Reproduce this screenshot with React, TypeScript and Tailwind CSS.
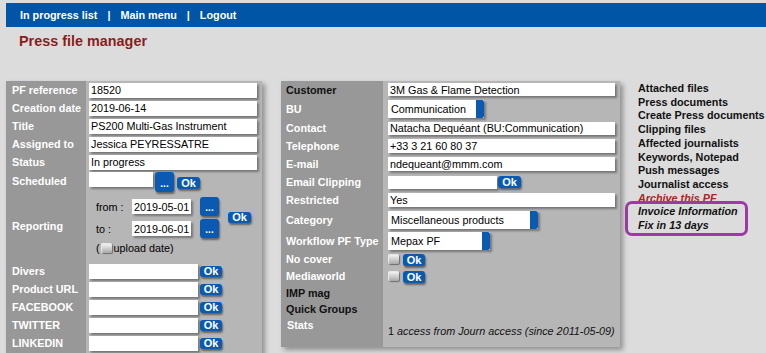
import React from "react";

const inputCls =
  "bg-white text-black font-normal pl-[2px] leading-[14px] shadow-[2px_2px_2px_rgba(0,0,0,0.35)] flex items-center whitespace-nowrap overflow-hidden";

function Ok({ w = 22, h = 12 }: { w?: number; h?: number }) {
  return (
    <div
      className="bg-[#0a5ab2] text-white font-bold rounded-[3px] flex items-center justify-center leading-none shadow-[1px_2px_2px_rgba(0,0,0,0.45)] text-[11px]"
      style={{ width: w, height: h }}
    >
      Ok
    </div>
  );
}

function Dots({ h = 19 }: { h?: number }) {
  return (
    <div
      className="w-[19px] bg-[#0a5ab2] text-white font-bold rounded-[3px] flex items-end justify-center pb-[3px] leading-none text-[10px] shadow-[1px_2px_2px_rgba(0,0,0,0.45)]"
      style={{ height: h }}
    >
      ...
    </div>
  );
}

function Check() {
  return (
    <div className="w-[11px] h-[10px] rounded-[2px] bg-[linear-gradient(to_bottom,#f2f2f2,#a8a8a8)] border-t border-l border-[#e8e8e8] shadow-[1px_1px_1px_rgba(0,0,0,0.4)]" />
  );
}

function Select({ w, text }: { w: number; text: string }) {
  return (
    <div
      className="h-[18px] bg-white flex items-center justify-between shadow-[2px_2px_2px_rgba(0,0,0,0.35)]"
      style={{ width: w }}
    >
      <span className="pl-[3px] text-black font-normal whitespace-nowrap">{text}</span>
      <div className="w-[8px] h-full bg-[#0a5ab2] rounded-r-[2px]" />
    </div>
  );
}

function LRow({
  label,
  h = 18,
  children,
  dark = false,
  className = "",
}: {
  label: React.ReactNode;
  h?: number;
  children?: React.ReactNode;
  dark?: boolean;
  className?: string;
}) {
  return (
    <div className={"flex items-center " + className} style={{ height: h }}>
      <div
        className={
          "w-[80px] pl-[6px] font-bold whitespace-nowrap " + (dark ? "text-[#111]" : "text-white")
        }
      >
        {label}
      </div>
      <div className="flex items-center pl-[3px]">{children}</div>
    </div>
  );
}

function MRow({
  label,
  h = 18,
  children,
  dark = false,
}: {
  label: React.ReactNode;
  h?: number;
  children?: React.ReactNode;
  dark?: boolean;
}) {
  return (
    <div className="flex items-center" style={{ height: h }}>
      <div
        className={
          "w-[102px] pl-[5px] font-bold whitespace-nowrap " + (dark ? "text-[#111]" : "text-white")
        }
      >
        {label}
      </div>
      <div className="flex items-center pl-[5px]">{children}</div>
    </div>
  );
}

export default function App() {
  return (
    <div className="w-[766px] h-[353px] overflow-hidden bg-[#dcdcdc] font-['Liberation_Sans',Arial,sans-serif] text-[10.8px] leading-[14px]">
      {/* nav */}
      <div className="pt-[3px] pl-[6px]">
        <div className="h-[24px] bg-[#0055a6] flex items-center pl-[14px] gap-[10px] text-white font-bold">
          <span>In progress list</span>
          <span>|</span>
          <span>Main menu</span>
          <span>|</span>
          <span>Logout</span>
        </div>
      </div>
      <div className="pt-[6px] pl-[19px] leading-[17px] text-[14.4px] font-bold text-[#8b1c1c]">
        Press file manager
      </div>

      <div className="mt-[31px] flex items-start">
        {/* left panel */}
        <div className="ml-[6px] w-[256px] pb-[12px] bg-[linear-gradient(to_right,#989898_80px,#b6b6b6_80px)] shadow-[3px_3px_5px_rgba(0,0,0,0.35)]">
          <LRow label="PF reference">
            <div className={inputCls + " w-[168px] h-[15px]"}>18520</div>
          </LRow>
          <LRow label="Creation date">
            <div className={inputCls + " w-[168px] h-[15px]"}>2019-06-14</div>
          </LRow>
          <LRow label="Title">
            <div className={inputCls + " w-[168px] h-[15px]"}>PS200 Multi-Gas Instrument</div>
          </LRow>
          <LRow label="Assigned to">
            <div className={inputCls + " w-[168px] h-[15px]"}>Jessica PEYRESSATRE</div>
          </LRow>
          <LRow label="Status">
            <div className={inputCls + " w-[168px] h-[15px]"}>In progress</div>
          </LRow>
          <div className="flex h-[23px]">
            <div className="w-[80px] pl-[6px] pt-[3px] font-bold text-white">Scheduled</div>
            <div className="flex items-start pl-[3px] pt-[1px]">
              <div className={inputCls + " w-[64px] h-[15px]"} />
              <div className="ml-[2px]">
                <Dots h={20} />
              </div>
              <div className="ml-[3px] mt-[5px]">
                <Ok w={23} h={12} />
              </div>
            </div>
          </div>
          <div className="flex h-[64px]">
            <div className="w-[80px] pl-[6px] font-bold text-white flex items-center">Reporting</div>
            <div className="pl-[10px] pt-[3px] flex flex-col">
              <div className="flex items-center">
                <div className="flex flex-col gap-[3px]">
                  <div className="flex items-center h-[19px] text-black">
                    <span className="w-[36px]">from :</span>
                    <div className={inputCls + " w-[59px] h-[15px]"}>2019-05-01</div>
                    <div className="ml-[9px]">
                      <Dots />
                    </div>
                  </div>
                  <div className="flex items-center h-[19px] text-black">
                    <span className="w-[36px]">to :</span>
                    <div className={inputCls + " w-[59px] h-[15px]"}>2019-06-01</div>
                    <div className="ml-[9px]">
                      <Dots />
                    </div>
                  </div>
                </div>
                <div className="ml-[9px]">
                  <Ok w={23} h={11} />
                </div>
              </div>
              <div className="mt-[3px] h-[14px] flex items-center text-black">
                <span>(</span>
                <div className="ml-[1px] mr-[2px]">
                  <Check />
                </div>
                <span>upload date)</span>
              </div>
            </div>
          </div>
          <LRow label="Divers" className="mt-[4px]">
            <div className={inputCls + " w-[109px] h-[15px]"} />
            <div className="ml-[2px]">
              <Ok w={22} h={11} />
            </div>
          </LRow>
          <LRow label="Product URL">
            <div className={inputCls + " w-[109px] h-[15px]"} />
            <div className="ml-[2px]">
              <Ok w={22} h={11} />
            </div>
          </LRow>
          <LRow label="FACEBOOK">
            <div className={inputCls + " w-[109px] h-[15px]"} />
            <div className="ml-[2px]">
              <Ok w={22} h={11} />
            </div>
          </LRow>
          <LRow label="TWITTER">
            <div className={inputCls + " w-[109px] h-[15px]"} />
            <div className="ml-[2px]">
              <Ok w={22} h={11} />
            </div>
          </LRow>
          <LRow label="LINKEDIN">
            <div className={inputCls + " w-[109px] h-[15px]"} />
            <div className="ml-[2px]">
              <Ok w={22} h={11} />
            </div>
          </LRow>
        </div>

        {/* middle panel */}
        <div className="ml-[19px] w-[339px] pb-[8px] bg-[linear-gradient(to_right,#989898_102px,#b6b6b6_102px)] shadow-[3px_3px_5px_rgba(0,0,0,0.35)]">
          <MRow label="Customer" h={17} dark>
            <div className={inputCls + " w-[227px] h-[13px]"}>3M Gas &amp; Flame Detection</div>
          </MRow>
          <MRow label="BU" h={21}>
            <Select w={96} text="Communication" />
          </MRow>
          <MRow label="Contact">
            <div className={inputCls + " w-[227px] h-[13px]"}>Natacha Dequéant (BU:Communication)</div>
          </MRow>
          <MRow label="Telephone">
            <div className={inputCls + " w-[227px] h-[14px]"}>+33 3 21 60 80 37</div>
          </MRow>
          <MRow label="E-mail">
            <div className={inputCls + " w-[227px] h-[14px]"}>ndequeant@mmm.com</div>
          </MRow>
          <MRow label="Email Clipping">
            <div className={inputCls + " w-[109px] h-[13px]"} />
            <div className="ml-[1px]">
              <Ok w={23} h={12} />
            </div>
          </MRow>
          <MRow label="Restricted">
            <div className={inputCls + " w-[227px] h-[14px]"}>Yes</div>
          </MRow>
          <MRow label="Category" h={21}>
            <Select w={150} text="Miscellaneous products" />
          </MRow>
          <MRow label="Workflow PF Type" h={21}>
            <Select w={102} text="Mepax PF" />
          </MRow>
          <MRow label="No cover" h={16}>
            <Check />
            <div className="ml-[4px] mt-[2px]">
              <Ok w={22} h={12} />
            </div>
          </MRow>
          <MRow label="Mediaworld">
            <Check />
            <div className="ml-[4px] mt-[2px]">
              <Ok w={22} h={12} />
            </div>
          </MRow>
          <MRow label="IMP mag" h={16} dark />
          <MRow label="Quick Groups" h={16} dark />
          <div className="flex h-[22px]">
            <div className="w-[102px] pl-[6px] font-bold text-white leading-[16px]">Stats</div>
            <div className="pl-[5px] flex items-end pb-[1px] text-[#111] whitespace-nowrap">
              <span>
                1 <i>access from Journ access (since 2011-05-09)</i>
              </span>
            </div>
          </div>
        </div>

        {/* right links */}
        <div className="relative ml-[18px] mt-[1px] font-bold text-[#111] leading-[13.7px] whitespace-nowrap">
          <div>Attached files</div>
          <div>Press documents</div>
          <div>Create Press documents</div>
          <div>Clipping files</div>
          <div>Affected journalists</div>
          <div>Keywords, Notepad</div>
          <div>Push messages</div>
          <div>Journalist access</div>
          <div className="italic text-[#a3281f]">Archive this PF</div>
          <div className="italic">Invoice Information</div>
          <div className="italic">Fix in 13 days</div>
          <div className="absolute left-[-13px] top-[119px] w-[123px] h-[35px] border-[3px] border-[#9b3aa3] rounded-[7px]" />
        </div>
      </div>
    </div>
  );
}
